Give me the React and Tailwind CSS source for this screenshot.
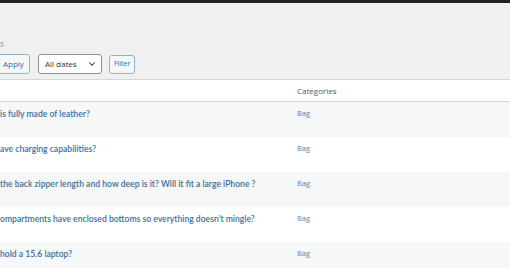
import { ChevronDown } from "lucide-react";

const rows = [
  "is fully made of leather?",
  "ave charging capabilities?",
  "the back zipper length and how deep is it? Will it fit a large iPhone ?",
  "ompartments have enclosed bottoms so everything doesn't mingle?",
  "hold a 15.6 laptop?",
];

export default function App() {
  return (
    <div
      className="h-[268px] w-[510px] overflow-hidden bg-[#f0f0f1] text-[8.5px] text-[#3c434a]"
      style={{ fontFamily: '"Open Sans", "Noto Sans", sans-serif' }}
    >
      <div className="h-[3px] bg-[#1d2327]" />
      <div className="h-[33px]" />
      <div className="h-[16px] leading-[16px] text-[#8c8f94]">s</div>
      <div className="flex h-[24px] items-center gap-[8px]">
        <button className="-ml-[3px] h-[20px] rounded-[3px] border border-[#8fb4d3] bg-[#f6f7f7] px-[5px] text-[8px] text-[#2271b1]">
          Apply
        </button>
        <div className="flex h-[20px] w-[64px] items-center justify-between rounded-[3px] border border-[#8c8f94] bg-white pl-[6px] pr-[4px] text-[8px] text-[#2c3338]">
          <span>All dates</span>
          <ChevronDown className="h-[10px] w-[10px]" strokeWidth={2.5} />
        </div>
        <button className="-ml-[1px] h-[19px] rounded-[3px] border border-[#8fb4d3] bg-[#f6f7f7] px-[4px] text-[7px] text-[#2271b1]">
          Filter
        </button>
      </div>
      <div className="mt-[3px] border-t border-[#d6d6d6] bg-white">
        <div className="flex h-[22px] items-center border-b border-[#d6d6d6]">
          <div className="w-[297px]" />
          <div className="text-[8px] text-[#50575e]">Categories</div>
        </div>
        {rows.map((q, i) => (
          <div
            key={q}
            className={`flex h-[35px] items-start pt-[6px] ${i % 2 === 0 ? "bg-[#f6f7f7]" : "bg-white"}`}
          >
            <div
              className="w-[297px] text-[8.6px] font-semibold text-[#3a6f9e]"
              style={{ fontFamily: "Lato, sans-serif" }}
            >
              {q}
            </div>
            <div className="text-[7.5px] text-[#4f87b8]">Bag</div>
          </div>
        ))}
      </div>
    </div>
  );
}
